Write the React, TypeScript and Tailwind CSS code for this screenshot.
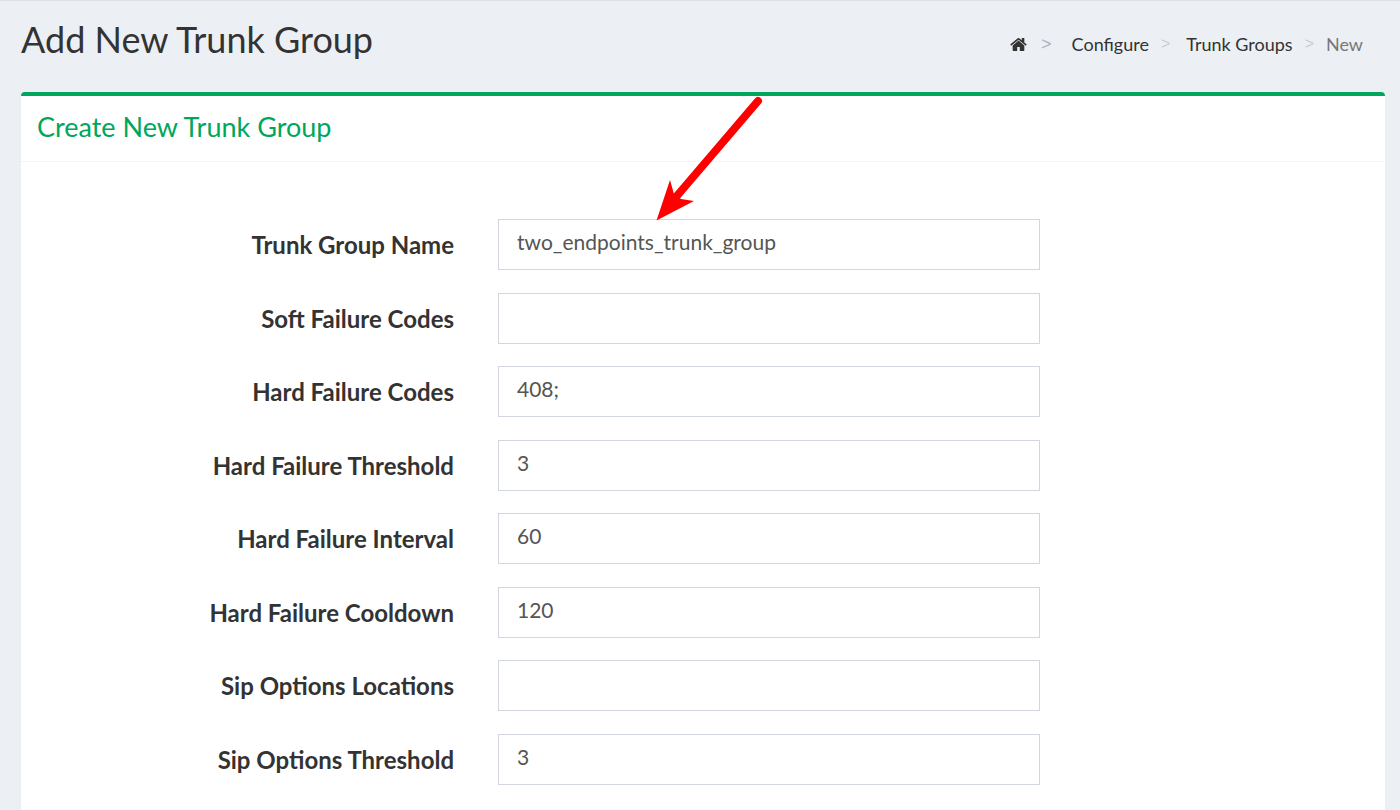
const fields = [
  { id: 'name', label: 'Trunk Group Name', value: 'two_endpoints_trunk_group' },
  { id: 'soft-failure-codes', label: 'Soft Failure Codes', value: '' },
  { id: 'hard-failure-codes', label: 'Hard Failure Codes', value: '408;' },
  { id: 'hard-failure-threshold', label: 'Hard Failure Threshold', value: '3' },
  { id: 'hard-failure-interval', label: 'Hard Failure Interval', value: '60' },
  { id: 'hard-failure-cooldown', label: 'Hard Failure Cooldown', value: '120' },
  { id: 'sip-options-locations', label: 'Sip Options Locations', value: '' },
  { id: 'sip-options-threshold', label: 'Sip Options Threshold', value: '3' },
];

function HomeIcon() {
  return (
    <svg viewBox="0 253 1664 1283" className="h-[13px] w-[17px]" fill="currentColor" aria-hidden="true">
      <path d="M1408 992v480q0 26-19 45t-45 19h-384v-384h-256v384h-384q-26 0-45-19t-19-45v-480q0-1 .5-3t.5-3l575-474 575 474q1 2 1 6zm223-69l-62 74q-8 9-21 11h-3q-13 0-21-7l-692-577-692 577q-12 8-24 7-13-2-21-11l-62-74q-8-10-7-23.5t11-21.5l719-599q32-26 76-26t76 26l244 204v-195q0-14 9-23t23-9h192q14 0 23 9t9 23v408l219 182q10 8 11 21.5t-7 23.5z" />
    </svg>
  );
}

function Breadcrumb() {
  return (
    <nav aria-label="Breadcrumb" className="pt-[31px] pr-[22px] text-lg leading-6">
      <ol className="flex items-center">
        <li>
          <a href="#" aria-label="Home" className="block">
            <HomeIcon />
          </a>
        </li>
        <li aria-hidden="true" className="pr-5 pl-3.5 font-['Liberation_Sans',sans-serif] text-[#aab2bd]">&gt;</li>
        <li>
          <a href="#">Configure</a>
        </li>
        <li aria-hidden="true" className="pr-4 pl-3 font-['Liberation_Sans',sans-serif] text-base text-[#ccc]">&gt;</li>
        <li>
          <a href="#">Trunk Groups</a>
        </li>
        <li aria-hidden="true" className="px-3 font-['Liberation_Sans',sans-serif] text-base text-[#ccc]">&gt;</li>
        <li aria-current="page" className="text-[#777]">New</li>
      </ol>
    </nav>
  );
}

function Arrow() {
  return (
    <svg
      viewBox="0 0 108 126"
      className="pointer-events-none absolute top-0 left-[635px] h-[126px] w-[108px]"
      aria-hidden="true"
    >
      <path d="M102 5 20 101" stroke="#f00" strokeWidth="8" strokeLinecap="round" />
      <path d="M.5 124.5 14 84l4 14 7 5 13 2z" fill="#f00" />
    </svg>
  );
}

export default function App() {
  return (
    <div className="flex min-h-screen flex-col border-t border-[#dcdfe5] bg-[#ecf0f5] pr-[15px] pl-[21px] font-['Lato','Liberation_Sans',sans-serif] text-[#333]">
      <header className="flex h-[91px] items-start justify-between">
        <h1 className="pt-3.5 text-4xl leading-12">Add New Trunk Group</h1>
        <Breadcrumb />
      </header>

      <main className="relative flex-1 rounded-t border-t-4 border-[#00a65a] bg-white shadow-[0_1px_1px_rgba(0,0,0,0.1)]">
        <h2 className="border-b border-[#f4f4f4] px-4 pt-[15px] pb-[18px] text-[27px] leading-8 text-[#00a65a]">
          Create New Trunk Group
        </h2>
        <form className="pt-[57px]">
          {fields.map((field) => (
            <div key={field.id} className="grid grid-cols-[433fr_542fr_301fr] gap-x-11 odd:mb-[23px] even:mb-[22px]">
              <label htmlFor={field.id} className="pt-2.5 text-right text-2xl leading-8 font-bold">
                {field.label}
              </label>
              <input
                id={field.id}
                type="text"
                defaultValue={field.value}
                className="h-[51px] w-full border border-[#d2d6de] bg-white px-[18px] pb-1.5 text-[21px] text-[#555] outline-none focus:border-[#3c8dbc]"
              />
            </div>
          ))}
        </form>
        <Arrow />
      </main>
    </div>
  );
}
